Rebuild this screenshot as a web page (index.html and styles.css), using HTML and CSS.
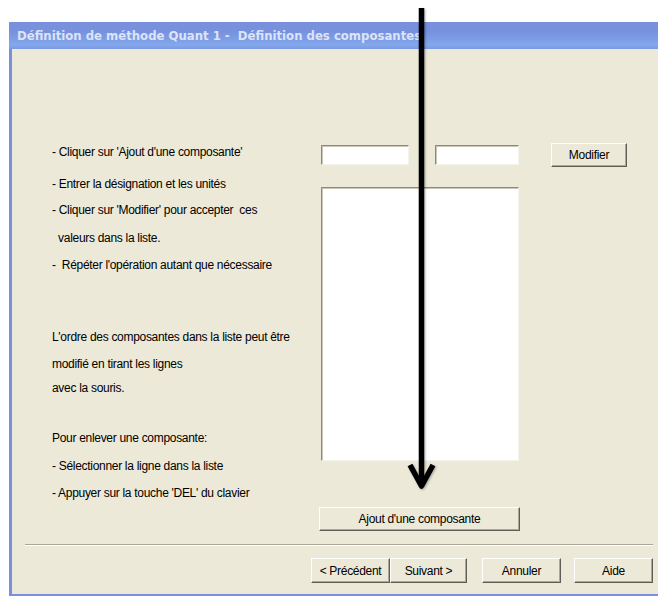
FILE: index.html
```html
<!DOCTYPE html>
<html lang="fr">
<head>
<meta charset="utf-8">
<title>Définition des composantes</title>
<link rel="stylesheet" href="styles.css">
</head>
<body>
<div class="window">
  <div class="titlebar"><span class="title">Définition de méthode Quant 1 -  Définition des composantes</span></div>
  <div class="client">
    <div class="main">
      <div class="help">
        <p class="line">- Cliquer sur 'Ajout d'une composante'</p>
        <p class="line l2">- Entrer la désignation et les unités</p>
        <p class="line l3">- Cliquer sur 'Modifier' pour accepter  ces</p>
        <p class="line l4">  valeurs dans la liste.</p>
        <p class="line l5">-  Répéter l'opération autant que nécessaire</p>
        <p class="line l6">L'ordre des composantes dans la liste peut être</p>
        <p class="line l7">modifié en tirant les lignes</p>
        <p class="line l8">avec la souris.</p>
        <p class="line l9">Pour enlever une composante:</p>
        <p class="line l10">- Sélectionner la ligne dans la liste</p>
        <p class="line l11">- Appuyer sur la touche 'DEL' du clavier</p>
      </div>
      <div class="editor">
        <div class="fields">
          <input class="field name" type="text">
          <input class="field unit" type="text">
          <button class="btn modify">Modifier</button>
        </div>
        <div class="listbox"></div>
        <button class="btn add">Ajout d'une composante</button>
      </div>
    </div>
    <div class="separator"></div>
    <div class="nav">
      <button class="btn prev">&lt; Précédent</button>
      <button class="btn next">Suivant &gt;</button>
      <button class="btn cancel">Annuler</button>
      <button class="btn help-btn">Aide</button>
    </div>
  </div>
</div>
<svg class="arrow" width="658" height="596" viewBox="0 0 658 596">
  <line x1="421.5" y1="8" x2="421.5" y2="484" stroke="#000" stroke-width="5.5"/>
  <polyline points="410,465 421.5,486 433,465" fill="none" stroke="#000" stroke-width="5.5" stroke-linejoin="round"/>
</svg>
</body>
</html>
```

FILE: styles.css
```css
body {
  margin: 0;
  width: 658px;
  height: 596px;
  position: relative;
  overflow: hidden;
  background: #fff;
  font-family: "Liberation Sans", Arial, sans-serif;
  color: #000;
}

.window {
  margin: 22px 0 0 9px;
  width: 649px;
  height: 574px;
  display: flex;
  flex-direction: column;
}

.titlebar {
  height: 27px;
  flex: none;
  display: flex;
  align-items: center;
  padding-left: 8px;
  background: linear-gradient(to bottom, #7a90dc 0%, #7891de 35%, #7e9de6 65%, #84a8ec 85%, #7b98e0 100%);
}

.title {
  font-family: "DejaVu Sans Condensed", "DejaVu Sans", sans-serif;
  font-stretch: semi-condensed;
  font-weight: bold;
  font-size: 13px;
  color: #dbe4f8;
  white-space: pre;
}

.client {
  flex: 1;
  display: flex;
  flex-direction: column;
  background: #ece9d8;
  border-left: 3px solid #7b8fdf;
  border-bottom: 2px solid #7b8fdf;
}

.main {
  height: 495px;
  display: flex;
}

.help {
  width: 267px;
  padding: 96px 0 0 40px;
}

.line {
  margin: 0;
  height: 14px;
  line-height: 14px;
  font-size: 12px;
  letter-spacing: -0.3px;
  white-space: pre;
}

.l2 { margin-top: 18px; }
.l3 { margin-top: 12px; }
.l4 { margin-top: 14px; }
.l5 { margin-top: 13px; }
.l6 { margin-top: 58px; }
.l7 { margin-top: 13px; }
.l8 { margin-top: 10px; }
.l9 { margin-top: 36px; }
.l10 { margin-top: 14px; }
.l11 { margin-top: 13px; }

.editor {
  padding-top: 94px;
  display: flex;
  flex-direction: column;
  align-items: flex-start;
}

.fields {
  display: flex;
  align-items: center;
  height: 24px;
}

.field {
  appearance: none;
  box-sizing: border-box;
  height: 20px;
  margin: 0;
  padding: 0;
  background: #fff;
  border: 1px solid;
  border-color: #8d8a7c #f4f3ec #f4f3ec #8d8a7c;
  box-shadow: inset 1px 1px 0 #c9c6b8;
  outline: none;
}

.field.name {
  width: 88px;
  margin-left: 2px;
}

.field.unit {
  width: 84px;
  margin-left: 26px;
}

.btn {
  appearance: none;
  box-sizing: border-box;
  margin: 0;
  padding: 0;
  background: #ece9d8;
  border: 1px solid;
  border-color: #fff #5f5d54 #5f5d54 #fff;
  box-shadow: inset -1px -1px 0 #aca899;
  font-family: "Liberation Sans", Arial, sans-serif;
  font-size: 12px;
  letter-spacing: -0.3px;
  color: #000;
  white-space: pre;
}

.btn.modify {
  width: 76px;
  height: 24px;
  margin-left: 32px;
}

.listbox {
  box-sizing: border-box;
  width: 198px;
  height: 274px;
  margin: 20px 0 0 2px;
  background: #fff;
  border: 1px solid;
  border-color: #8d8a7c #f4f3ec #f4f3ec #8d8a7c;
  box-shadow: inset 1px 1px 0 #c9c6b8;
}

.btn.add {
  width: 201px;
  height: 24px;
  margin-top: 46px;
}

.separator {
  margin-left: 13px;
  width: 628px;
  border-top: 1px solid #aca899;
  border-bottom: 1px solid #fff;
}

.nav {
  display: flex;
  margin-top: 12px;
  padding-left: 299px;
}

.nav .btn {
  height: 25px;
  width: 79px;
}

.nav .btn.next { width: 77px; }
.nav .btn.cancel { margin-left: 15px; }
.nav .btn.help-btn { margin-left: 13px; }

.arrow {
  position: absolute;
  left: 0;
  top: 0;
  pointer-events: none;
  filter: drop-shadow(1px 1px 1px rgba(0, 0, 0, 0.3));
}
```
